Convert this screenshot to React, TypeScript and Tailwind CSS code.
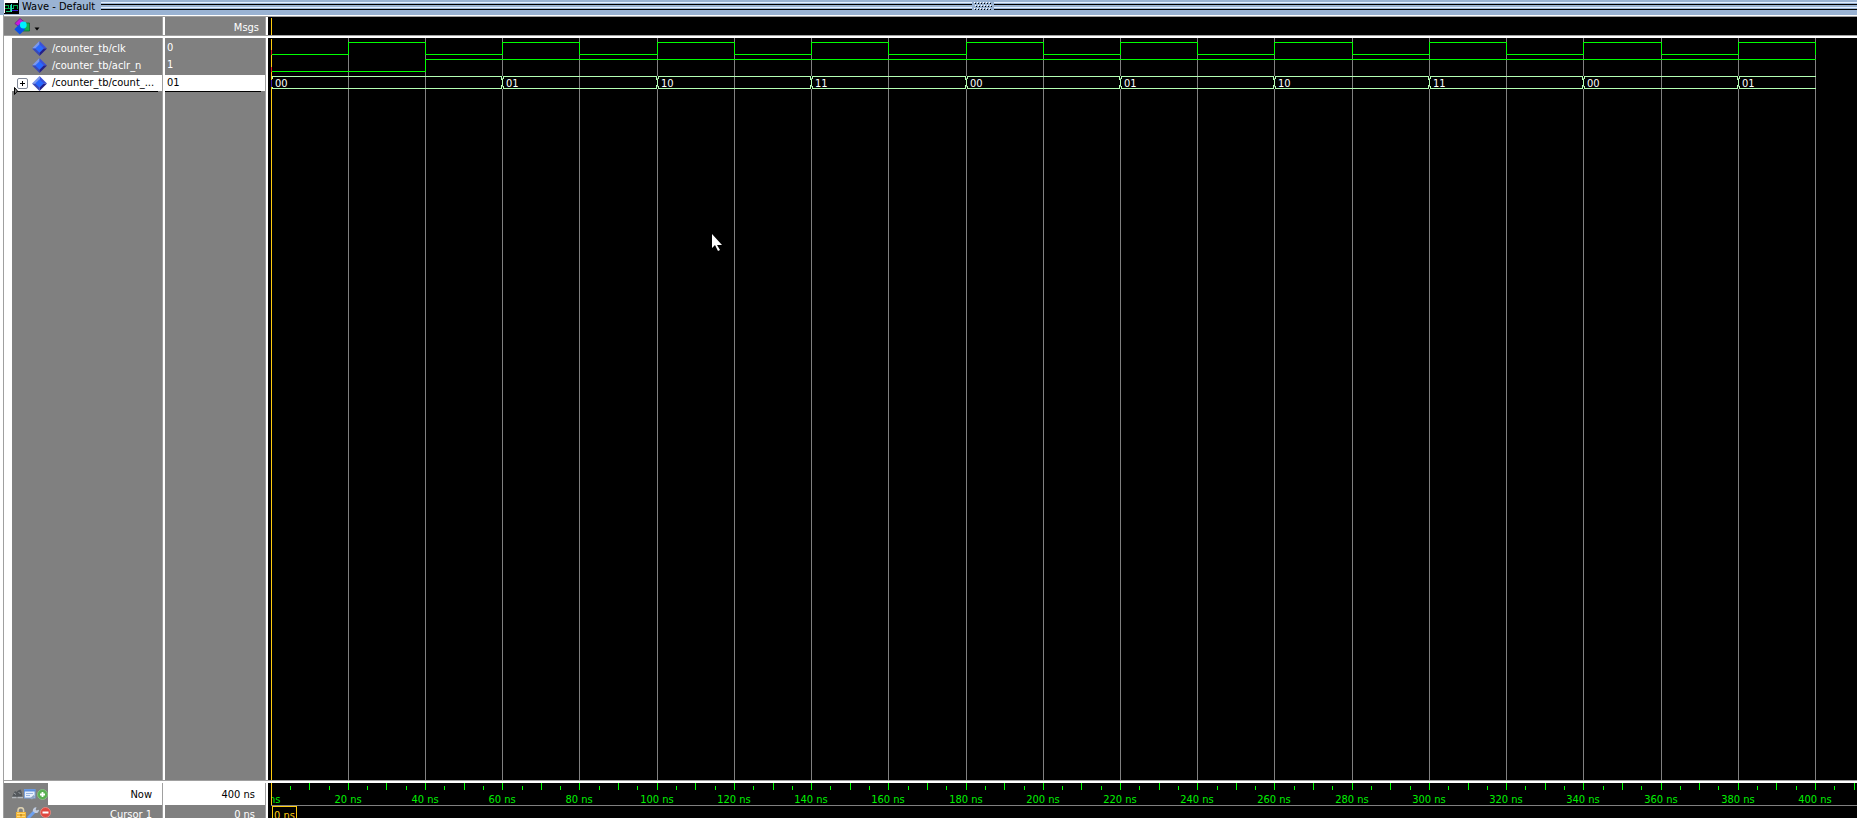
import React from "react";

const ORIGIN = 3;
const PX_PER_NS = 3.861;
const END_NS = 400;

const at = (ns: number) => ORIGIN + Math.floor(ns * PX_PER_NS + 0.11);

const clkEdges = Array.from({ length: 20 }, (_, i) => (i + 1) * 20);
const gridTimes = clkEdges;
const ticks = Array.from({ length: 120 }, (_, i) => (i + 1) * 5);

const busValues = [
  { t: 0, v: "00" },
  { t: 60, v: "01" },
  { t: 100, v: "10" },
  { t: 140, v: "11" },
  { t: 180, v: "00" },
  { t: 220, v: "01" },
  { t: 260, v: "10" },
  { t: 300, v: "11" },
  { t: 340, v: "00" },
  { t: 380, v: "01" },
];

const clkPath =
  `M${at(0)} 16` +
  clkEdges.map((t, i) => `H${at(t)}V${i % 2 === 0 ? 4 : 16}`).join("");

const aclrPath = `M${at(0)} 33H${at(40)}V21H${at(END_NS)}`;

function WaveIcon() {
  return (
    <svg width="15" height="14" viewBox="0 0 15 14" shapeRendering="crispEdges" aria-hidden="true">
      <rect width="15" height="14" fill="#000" />
      <rect x="1" width="13" height="3" fill="#fff" />
      <rect x="0" width="1" height="13" fill="#fff" />
      <path d="M1 5.500h3v3H1M4 8.500h3M9.500 9V5.500h4V9" fill="none" stroke="#00a848" />
      <path d="M2 11.500h4.500V5M7 8.500h3" fill="none" stroke="#18c878" />
      <path d="M7.500 4v8" stroke="#30d8d0" />
      <path d="M8 10.500h6" stroke="#3420d0" />
    </svg>
  );
}

function ShapesIcon() {
  return (
    <svg width="17" height="17" viewBox="0 0 17 17" aria-hidden="true">
      <path d="M.8 5.500 6 .5l4.500 3.500-5 5z" fill="#c818dc" stroke="#70208c" strokeWidth=".8" />
      <path d="M9 5h6.500v8H9z" fill="#14b04c" stroke="#0c6c34" strokeWidth=".8" />
      <path d="M5.800 6 11.300 11.300 5.800 16.600.3 11.300z" fill="#0a50e8" />
      <circle cx="9.300" cy="7" r="3.400" fill="#00f0ff" />
    </svg>
  );
}

function DiamondIcon() {
  return (
    <svg width="15" height="15" viewBox="0 0 15 15" aria-hidden="true" className="shrink-0">
      <path d="M7.500 0 0 7.500h7.500z" fill="#7a98f0" />
      <path d="M7.500 0 15 7.500H7.500z" fill="#3a50d8" />
      <path d="M0 7.500 7.500 15V7.500z" fill="#3848b8" />
      <path d="M15 7.500 7.500 15V7.500z" fill="#241f88" />
      <path d="M7.500 3.200 11.800 7.500 7.500 11.800 3.200 7.500z" fill="#2868ff" />
    </svg>
  );
}

function BinocularsIcon() {
  return (
    <svg width="11" height="11" viewBox="0 0 11 11" aria-hidden="true">
      <path d="M0 8 2 3.500 3 2l1.500 1L6 1.500 8.500.5l1 2L10.500 8z" fill="#54585c" />
      <path d="M2 4l2 1.500M6.500 3l2 2" stroke="#9ca0a4" />
      <path d="M0 8.500h4.500M5.500 8.500H11" stroke="#b4b8bc" strokeWidth="1.500" />
    </svg>
  );
}

function SheetIcon() {
  return (
    <svg width="12" height="11" viewBox="0 0 12 11" aria-hidden="true">
      <rect x=".5" y=".5" width="10.500" height="8.500" fill="#e8f0fc" stroke="#7ca4e0" />
      <path d="M0 1.500h11.500" stroke="#5c90e0" strokeWidth="2" />
      <path d="M2 4.500h7M2 6.500h4" stroke="#98b4e0" />
      <path d="M6 9.500l3.500-3.500 1.500 1.500-3 3z" fill="#90a4c0" />
    </svg>
  );
}

function AddIcon() {
  return (
    <svg width="11" height="11" viewBox="0 0 11 11" aria-hidden="true">
      <circle cx="5.500" cy="5.500" r="5" fill="#58b050" stroke="#8cc888" strokeWidth=".8" />
      <path d="M5.500 3v5M3 5.500h5" stroke="#fff" strokeWidth="1.800" />
    </svg>
  );
}

function LockIcon() {
  return (
    <svg width="10" height="12" viewBox="0 0 10 12" aria-hidden="true">
      <path d="M2 6V3.500a2.800 2.800 0 0 1 5.600 0V6" fill="none" stroke="#dcd0b0" strokeWidth="1.500" />
      <rect y="5" width="10" height="7" fill="#f0b438" />
      <path d="M1 6.500h8M1 9.500h8" stroke="#ffd878" />
      <path d="M5 7v2.500" stroke="#a87010" />
    </svg>
  );
}

function WrenchIcon() {
  return (
    <svg width="12" height="12" viewBox="0 0 12 12" aria-hidden="true">
      <path d="M1.800 10.200 6.800 5.200" stroke="#6ca0f0" strokeWidth="3" strokeLinecap="round" />
      <path d="M9.500.2 8.700 2.800l.8.700 2.500-.8c0 2.300-1.600 3.800-4 3.300L5.800 4.200C5.500 1.800 7.200 0 9.500.2z" fill="#c0cce0" />
    </svg>
  );
}

function RemoveIcon() {
  return (
    <svg width="11" height="11" viewBox="0 0 11 11" aria-hidden="true">
      <circle cx="5.500" cy="5.500" r="5" fill="#e04840" stroke="#f09088" strokeWidth=".8" />
      <path d="M2.500 5.500h6" stroke="#fff" strokeWidth="2" />
    </svg>
  );
}

function PaneDivider() {
  return <div className="h-[3px] shrink-0 border-t border-[#a0a0a0] bg-white" />;
}

function TitleLines() {
  return (
    <>
      <div className="h-[3px] border-y border-t-[#e4f0ff] border-b-black" />
      <div className="mt-[2px] h-[3px] border-y border-t-[#e4f0ff] border-b-black" />
    </>
  );
}

function Grip() {
  const rows = [2, 5, 8];
  return (
    <svg width="18" height="12" viewBox="0 0 18 12" shapeRendering="crispEdges" className="mx-[2px] shrink-0" aria-hidden="true">
      {rows.map((y, r) =>
        [0, 1, 2, 3, 4, 5].map((c) => (
          <g key={`${r}-${c}`}>
            <rect x={c * 3 + (r % 2)} y={y} width="1" height="1" fill="#fff" />
            <rect x={c * 3 + 1 + (r % 2)} y={y + 1} width="1" height="1" fill="#000" />
          </g>
        )),
      )}
    </svg>
  );
}

function WaveCanvas() {
  return (
    <svg className="block h-full w-full" shapeRendering="crispEdges" role="img" aria-label="Signal waveforms">
      {gridTimes.map((t) => (
        <rect key={t} x={at(t)} y="0" width="1" height="100%" fill="#808080" />
      ))}
      <rect x={at(0)} y="1" width="1" height="100%" fill="#ffcc10" />
      <g transform="translate(0.5 0.5)" fill="none">
        <path d={clkPath} stroke="#00ff00" />
        <path d={aclrPath} stroke="#00ff00" />
        <path d={`M${at(0)} 38H${at(END_NS)}M${at(0)} 50H${at(END_NS)}`} stroke="#b4ffb4" />
        <path d={`M${at(0)} 11v5M${at(0)} 28v5`} stroke="#e02020" />
        <path d={`M${at(0)} 41v7`} stroke="#4020a0" />
        <path d={`M${at(0) + 1} 38v2M${at(0) + 1} 48v2`} stroke="#b4ffb4" />
      </g>
      {busValues.slice(1).map(({ t }) => (
        <g key={t} fill="#b4ffb4">
          <rect x={at(t)} y="41" width="1" height="7" />
          <rect x={at(t)} y="38" width="1" height="2" fill="#000" />
          <rect x={at(t)} y="49" width="1" height="2" fill="#000" />
          <rect x={at(t) - 1} y="38" width="1" height="4" />
          <rect x={at(t) + 1} y="38" width="1" height="3" />
          <rect x={at(t) - 1} y="47" width="1" height="4" />
          <rect x={at(t) + 1} y="48" width="1" height="3" />
        </g>
      ))}
      {busValues.map(({ t, v }) => (
        <text key={t} x={at(t) + 4} y="49" fill="#fff">
          {v}
        </text>
      ))}
    </svg>
  );
}

function Timeline() {
  return (
    <svg className="block h-full w-full" shapeRendering="crispEdges" role="img" aria-label="Time axis">
      {ticks.map((t) => (
        <rect
          key={t}
          x={at(t)}
          y={t % 10 === 0 ? 0 : 3}
          width="1"
          height={t % 10 === 0 ? 7 : 4}
          fill="#00ff00"
        />
      ))}
      {gridTimes.map((t) => (
        <text key={t} x={at(t)} y="20" fill="#00f000" textAnchor="middle">
          {t} ns
        </text>
      ))}
      <text x={at(0) - 2} y="20" fill="#00f000">
        ns
      </text>
      <rect x="0" y="0" width={at(0)} height="23" fill="#000" />
      <rect x={at(0)} y="0" width="1" height="23" fill="#ffcc10" />
      <rect x={at(0)} y="22" width="100%" height="1" fill="#808080" />
      <rect x={at(0) + 1} y="23" width="24" height="20" fill="none" stroke="#ffcc10" />
      <text x={at(0) + 3} y="36" fill="#ffcc10">
        0 ns
      </text>
    </svg>
  );
}

const COLS = "grid grid-cols-[158px_3px_100px_3px_minmax(0,1fr)]";

function ColumnDivider() {
  return <div className="border-l border-[#a0a0a0] bg-white" />;
}

export default function App() {
  return (
    <div className="flex h-screen flex-col overflow-hidden bg-white font-['DejaVu_Sans_Condensed','DejaVu_Sans',sans-serif] text-[11px] leading-4 text-white">
      <header className="flex h-[15px] shrink-0 items-start bg-[#9ab3d3] pl-1 text-black">
        <WaveIcon />
        <h1 className="mr-[6px] ml-[3px] h-[15px] leading-[14px]">Wave - Default</h1>
        <div className="flex-[1.01] pt-[2px]">
          <TitleLines />
        </div>
        <Grip />
        <div className="flex-1 pt-[2px]">
          <TitleLines />
        </div>
      </header>

      <main className="ml-[3px] flex min-h-0 flex-1 flex-col border-l border-[#a0a0a0]">
        <div className="mt-px h-px shrink-0 bg-[#a0a0a0]" />
        <div className={`${COLS} h-[18px] shrink-0`}>
          <div className="flex items-center bg-[#808080] pl-[10px]">
            <button type="button" aria-label="Object filter" className="flex items-end gap-[3px]">
              <ShapesIcon />
              <svg width="6" height="4" viewBox="0 0 6 4" aria-hidden="true" className="mb-1">
                <path d="M.5.500h5L3 3.500z" fill="#000" />
              </svg>
            </button>
          </div>
          <ColumnDivider />
          <div className="bg-[#808080] pt-[3px] pr-[6px] text-right">Msgs</div>
          <ColumnDivider />
          <div className="bg-black pt-px pl-[3px]">
            <div className="h-full w-px bg-[#ffcc10]" />
          </div>
        </div>
        <PaneDivider />

        <div className={`${COLS} min-h-0 flex-1`}>
          <div className="ml-2 bg-[#808080] pt-[2px]">
            <ul>
              <li className="flex h-[17px] items-center gap-[5px] pl-5">
                <DiamondIcon />
                /counter_tb/clk
              </li>
              <li className="flex h-[17px] items-center gap-[5px] pl-5">
                <DiamondIcon />
                /counter_tb/aclr_n
              </li>
              <li className="relative mt-px flex h-4 items-center gap-[5px] bg-white pl-[5px] text-black">
                <button
                  type="button"
                  aria-label="Expand /counter_tb/count"
                  className="flex size-[11px] items-center justify-center rounded-[2px] border border-[#808898] bg-white"
                >
                  <svg width="5" height="5" viewBox="0 0 5 5" shapeRendering="crispEdges" aria-hidden="true">
                    <path d="M2 0h1v5H2zM0 2h5v1H0z" fill="#000" />
                  </svg>
                </button>
                <span className="-ml-px">
                  <DiamondIcon />
                </span>
                /counter_tb/count_...
                <svg width="4" height="8" viewBox="0 0 4 8" aria-hidden="true" className="absolute top-[12px] left-[2px]">
                  <path d="M.5.500 3.500 4 .5 7.500z" fill="#808080" stroke="#000" />
                </svg>
              </li>
            </ul>
            <div className="mr-1 ml-1 h-px bg-black" />
          </div>
          <ColumnDivider />
          <div className="bg-[#808080] pt-[2px]">
            <ul>
              <li className="h-[17px] pl-[2px]">0</li>
              <li className="h-[17px] pl-[2px]">1</li>
              <li className="mt-px h-4 bg-white pl-[2px] text-black">01</li>
            </ul>
            <div className="mr-1 h-px bg-black" />
          </div>
          <ColumnDivider />
          <div className="relative min-h-0 bg-black">
            <WaveCanvas />
            <svg width="11" height="18" viewBox="0 0 11 18" aria-hidden="true" className="absolute top-[196px] left-[444px]">
              <path d="M0 0v14l3-3 3 6 2-1-3-5h5z" fill="#fff" />
            </svg>
          </div>
        </div>
        <PaneDivider />

        <div className={`${COLS} h-[35px] shrink-0`}>
          <div>
            <div className="flex h-[22px]">
              <div className="flex w-11 items-center gap-px bg-[#808080] pl-2">
                <button type="button" aria-label="Find">
                  <BinocularsIcon />
                </button>
                <button type="button" aria-label="Configure grid">
                  <SheetIcon />
                </button>
                <button type="button" aria-label="Add cursor">
                  <AddIcon />
                </button>
              </div>
              <div className="flex-1 bg-white pt-1 pr-[10px] text-right text-black">Now</div>
            </div>
            <div className="flex h-[13px] justify-between overflow-hidden bg-[#808080] pt-[2px] pr-[10px] pl-3">
              <div className="flex items-start gap-px">
                <button type="button" aria-label="Lock cursor">
                  <LockIcon />
                </button>
                <button type="button" aria-label="Edit cursor">
                  <WrenchIcon />
                </button>
                <button type="button" aria-label="Remove cursor">
                  <RemoveIcon />
                </button>
              </div>
              <span>Cursor 1</span>
            </div>
          </div>
          <ColumnDivider />
          <div className="text-right">
            <div className="h-[22px] bg-white pt-1 pr-[10px] text-black">400 ns</div>
            <div className="h-[13px] overflow-hidden bg-[#808080] pt-[2px] pr-[10px]">0 ns</div>
          </div>
          <ColumnDivider />
          <div className="bg-black">
            <Timeline />
          </div>
        </div>
      </main>
    </div>
  );
}
